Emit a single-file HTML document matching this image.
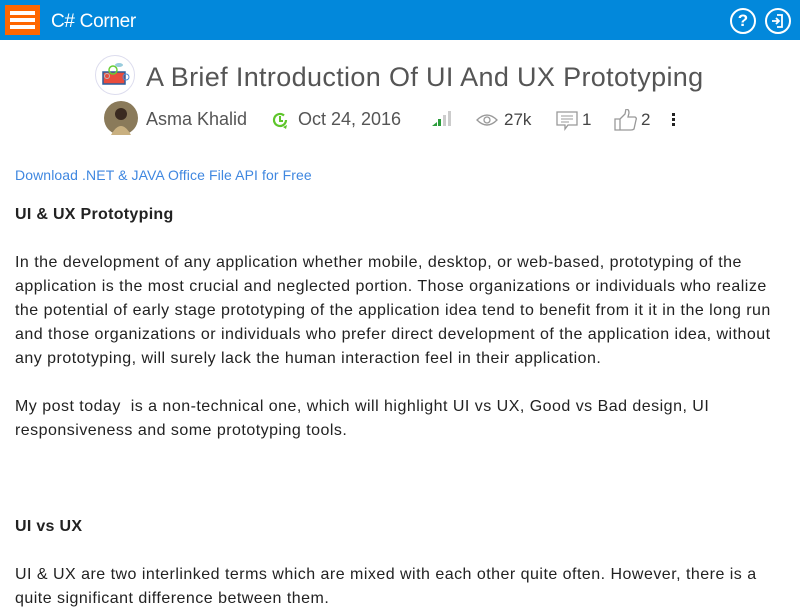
<!DOCTYPE html>
<html><head><meta charset="utf-8"><style>
*{margin:0;padding:0;box-sizing:border-box}
body{width:800px;height:600px;overflow:hidden;background:#fff;font-family:"Liberation Sans",sans-serif;position:relative}
.hdr{position:absolute;left:0;top:0;width:800px;height:40px;background:#0288db}
.burg{position:absolute;left:5px;top:5px;width:35px;height:30px;background:#ff6600}
.burg i{position:absolute;left:5px;width:25px;height:4px;background:#fff}
.brand{position:absolute;left:51px;top:11px;color:#fff;font-size:19px;letter-spacing:-0.3px}
.circ{position:absolute;top:8px;width:26px;height:26px;border:2px solid #fff;border-radius:50%;color:#fff;font-weight:bold;font-size:17px;text-align:center;line-height:22px}
.title{position:absolute;left:146px;top:62px;font-size:27px;color:#555;white-space:nowrap;letter-spacing:0.35px}
.meta{position:absolute;top:109px;font-size:18px;color:#555;white-space:nowrap}
.l{position:absolute;left:15px;font-size:16px;color:#222;white-space:nowrap;letter-spacing:0.48px}
.b{font-weight:bold;letter-spacing:0.3px}
</style></head><body>
<div class="hdr">
 <div class="burg"><i style="top:6px"></i><i style="top:13px"></i><i style="top:20px"></i></div>
 <div class="brand">C# Corner</div>
 <div class="circ" style="left:730px">?</div>
 <div class="circ" style="left:765px"><svg width="22" height="22" viewBox="0 0 22 22" style="display:block"><path d="M10 5h5v12h-5M5 11h7M9 8l3 3-3 3" fill="none" stroke="#fff" stroke-width="1.8"/></svg></div>
</div>
<svg style="position:absolute;left:95px;top:55px" width="40" height="40" viewBox="0 0 40 40">
 <circle cx="20" cy="20" r="19.5" fill="#fff" stroke="#dde" />
 <rect x="8" y="17" width="22" height="12" fill="#e84c3d" stroke="#2c5d9b" stroke-width="1.5"/>
 <circle cx="18" cy="15" r="4" fill="none" stroke="#6c3" stroke-width="1.5"/>
 <circle cx="12" cy="21" r="2.5" fill="none" stroke="#bbb"/>
 <circle cx="31" cy="22" r="3" fill="none" stroke="#4a8bd6"/>
 <ellipse cx="24" cy="10" rx="4" ry="2" fill="#9cd"/>
</svg>
<div class="title">A Brief Introduction Of UI And UX Prototyping</div>
<svg style="position:absolute;left:104px;top:101px" width="34" height="34"><circle cx="17" cy="17" r="17" fill="#8a7a5a"/><circle cx="17" cy="13" r="6" fill="#3a2a20"/><path d="M7 34 Q17 16 27 34Z" fill="#c9b080"/></svg>
<div class="meta" style="left:146px">Asma Khalid</div>
<svg style="position:absolute;left:270px;top:110px" width="20" height="20" viewBox="0 0 20 20"><path d="M16 10a6 6 0 1 1-2-4.5" fill="none" stroke="#5ec52b" stroke-width="2.2"/><path d="M10 6v5h3" fill="none" stroke="#5ec52b" stroke-width="2"/><path d="M13 17l3 2 1-4" fill="#5ec52b"/></svg>
<div class="meta" style="left:298px">Oct 24, 2016</div>
<svg style="position:absolute;left:432px;top:111px" width="22" height="16"><path d="M0 15L5 11V15Z" fill="#2a9d3a"/><rect x="6" y="8" width="3" height="7" fill="#2a9d3a"/><rect x="11" y="4" width="3" height="11" fill="#ccc"/><rect x="16" y="0" width="3" height="15" fill="#ccc"/></svg>
<svg style="position:absolute;left:476px;top:113px" width="22" height="14"><path d="M1 7Q11 -3 21 7Q11 17 1 7Z" fill="none" stroke="#999" stroke-width="1.3"/><circle cx="11" cy="7" r="3" fill="none" stroke="#999" stroke-width="1.3"/></svg>
<div class="meta" style="left:504px;font-size:17px;top:110px;color:#444">27k</div>
<svg style="position:absolute;left:556px;top:111px" width="22" height="20"><path d="M1 1H21V14H12L9 18V14H1Z" fill="none" stroke="#999" stroke-width="1.3"/><path d="M5 5h12M5 8h12M5 11h8" stroke="#999"/></svg>
<div class="meta" style="left:582px;font-size:17px;top:110px;color:#444">1</div>
<svg style="position:absolute;left:614px;top:109px" width="24" height="22"><path d="M1 10h5v11H1ZM6 10l5-5 1-5q3 0 3 4l-1 4h7q2 1 1 3l-2 9q-1 1-3 1H6" fill="none" stroke="#999" stroke-width="1.3"/></svg>
<div class="meta" style="left:641px;font-size:17px;top:110px;color:#444">2</div>
<div style="position:absolute;left:672px;top:113px;width:3px"><i style="display:block;width:3px;height:3px;background:#222;margin-bottom:2px"></i><i style="display:block;width:3px;height:3px;background:#222;margin-bottom:2px"></i><i style="display:block;width:3px;height:3px;background:#222"></i></div>
<div class="l" style="top:167px;font-size:14px;color:#3f87e0;letter-spacing:0.1px">Download .NET &amp; JAVA Office File API for Free</div>
<div class="l b" style="top:206px">UI &amp; UX Prototyping</div>
<div class="l" style="top:254px">In the development of any application whether mobile, desktop, or web-based, prototyping of the</div>
<div class="l" style="top:278px">application is the most crucial and neglected portion. Those organizations or individuals who realize</div>
<div class="l" style="top:302px">the potential of early stage prototyping of the application idea tend to benefit from it it in the long run</div>
<div class="l" style="top:326px">and those organizations or individuals who prefer direct development of the application idea, without</div>
<div class="l" style="top:350px">any prototyping, will surely lack the human interaction feel in their application.</div>
<div class="l" style="top:398px">My post today&nbsp; is a non-technical one, which will highlight UI vs UX, Good vs Bad design, UI</div>
<div class="l" style="top:422px">responsiveness and some prototyping tools.</div>
<div class="l b" style="top:518px">UI vs UX</div>
<div class="l" style="top:566px">UI &amp; UX are two interlinked terms which are mixed with each other quite often. However, there is a</div>
<div class="l" style="top:590px">quite significant difference between them.</div>
</body></html>
